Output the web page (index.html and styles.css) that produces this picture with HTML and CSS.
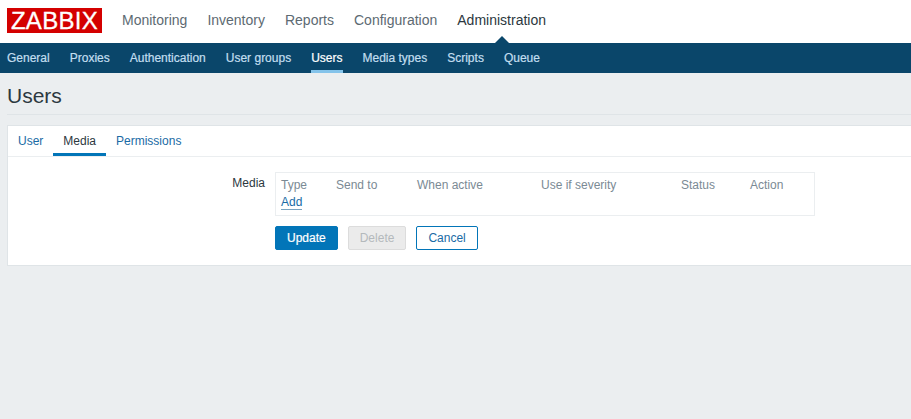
FILE: index.html
```html
<!DOCTYPE html>
<html lang="en">
<head>
    <meta charset="UTF-8">
    <meta name="viewport" content="width=device-width, initial-scale=1.0">
    <title>Users</title>
    <link rel="stylesheet" href="styles.css">
</head>
<body>
    <header class="top-nav">
        <a class="logo" href="#">ZABBIX</a>
        <nav class="top-menu">
            <a href="#">Monitoring</a>
            <a href="#">Inventory</a>
            <a href="#">Reports</a>
            <a href="#">Configuration</a>
            <a class="selected" href="#">Administration</a>
        </nav>
    </header>
    <nav class="sub-nav">
        <a href="#">General</a>
        <a href="#">Proxies</a>
        <a href="#">Authentication</a>
        <a href="#">User groups</a>
        <a class="selected" href="#">Users</a>
        <a href="#">Media types</a>
        <a href="#">Scripts</a>
        <a href="#">Queue</a>
    </nav>
    <main class="content">
        <div class="page-title"><h1>Users</h1></div>
        <section class="card">
            <div class="tabs">
                <a href="#">User</a>
                <a class="selected" href="#">Media</a>
                <a href="#">Permissions</a>
            </div>
            <form class="form">
                <label class="form-label">Media</label>
                <div class="media-box">
                    <div class="media-head">
                        <span>Type</span>
                        <span>Send to</span>
                        <span>When active</span>
                        <span>Use if severity</span>
                        <span>Status</span>
                        <span>Action</span>
                    </div>
                    <a class="add-link" href="#">Add</a>
                </div>
                <div class="buttons">
                    <button class="btn btn-main" type="button">Update</button>
                    <button class="btn btn-off" type="button" disabled>Delete</button>
                    <button class="btn btn-alt" type="button">Cancel</button>
                </div>
            </form>
        </section>
    </main>
</body>
</html>
```

FILE: styles.css
```css
html, body {
    height: 100%;
}
body {
    margin: 0;
    background-color: #ebeef0;
    color: #2c3840;
    font-family: "Liberation Sans", Arial, sans-serif;
    font-size: 12px;
    overflow: hidden;
}
a {
    text-decoration: none;
}
.top-nav {
    display: flex;
    align-items: flex-start;
    height: 43px;
    background-color: #fff;
}
.logo {
    width: 95px;
    height: 25px;
    margin: 8px 0 0 7px;
    background-color: #d40000;
    color: #fff;
    font-size: 24px;
    line-height: 26px;
    text-align: center;
    letter-spacing: 0.3px;
    -webkit-text-stroke: 0.3px #fff;
}
.top-menu {
    display: flex;
    gap: 20px;
    margin-left: 20px;
    padding-top: 12px;
}
.top-menu a {
    position: relative;
    color: #5d6a72;
    font-size: 14px;
    line-height: 17px;
}
.top-menu a.selected {
    color: #2c3840;
}
.top-menu a.selected::after {
    content: "";
    position: absolute;
    left: 50%;
    top: 24px;
    margin-left: -7px;
    border-left: 7px solid transparent;
    border-right: 7px solid transparent;
    border-bottom: 7px solid #0a466a;
}
.sub-nav {
    display: flex;
    gap: 20px;
    height: 30px;
    padding-left: 7px;
    background-color: #0a466a;
}
.sub-nav a {
    height: 30px;
    color: #c3dff0;
    font-size: 12px;
    line-height: 30px;
    box-sizing: border-box;
    -webkit-text-stroke: 0.2px;
}
.sub-nav a.selected {
    color: #fff;
    border-bottom: 3px solid #84c3ea;
}
.content {
    padding-left: 7px;
}
.page-title {
    height: 41px;
    border-bottom: 1px solid #dfe4e7;
    margin-bottom: 10px;
}
.page-title h1 {
    margin: 0;
    font-size: 21px;
    font-weight: normal;
    line-height: 46px;
}
.card {
    height: 139px;
    background-color: #fff;
    border: 1px solid #dfe4e7;
    border-right: 0;
}
.tabs {
    display: flex;
    height: 30px;
    border-bottom: 1px solid #ebeef0;
}
.tabs a {
    height: 30px;
    padding: 0 10px;
    color: #1a6ba5;
    font-size: 12px;
    line-height: 30px;
    box-sizing: border-box;
}
.tabs a.selected {
    color: #2c3840;
    border-bottom: 3px solid #0275b8;
}
.form {
    display: grid;
    grid-template-columns: 257px 540px;
    column-gap: 10px;
    row-gap: 10px;
    padding-top: 15px;
}
.form-label {
    padding-top: 4px;
    text-align: right;
    line-height: 14px;
}
.media-box {
    height: 44px;
    padding: 5px;
    border: 1px solid #ebeef0;
    box-sizing: border-box;
}
.media-head {
    display: grid;
    grid-template-columns: 55px 81px 124px 140px 69px 1fr;
    color: #7b8a94;
    line-height: 14px;
}
.add-link {
    display: inline-block;
    margin-top: 3px;
    color: #1a6ba5;
    line-height: 14px;
    border-bottom: 1px solid #7aa3bf;
}
.buttons {
    grid-column: 2;
    display: flex;
    gap: 10px;
}
.btn {
    height: 24px;
    padding: 0 11px;
    border: 1px solid #0275b8;
    border-radius: 2px;
    font-family: inherit;
    font-size: 12px;
}
.btn-main {
    background-color: #0275b8;
    color: #fff;
    -webkit-text-stroke: 0.2px;
}
.btn-off {
    background-color: #ebebeb;
    border-color: #dcdcdc;
    color: #b4b9bc;
}
.btn-alt {
    background-color: #fff;
    color: #1a6ba5;
}
```
